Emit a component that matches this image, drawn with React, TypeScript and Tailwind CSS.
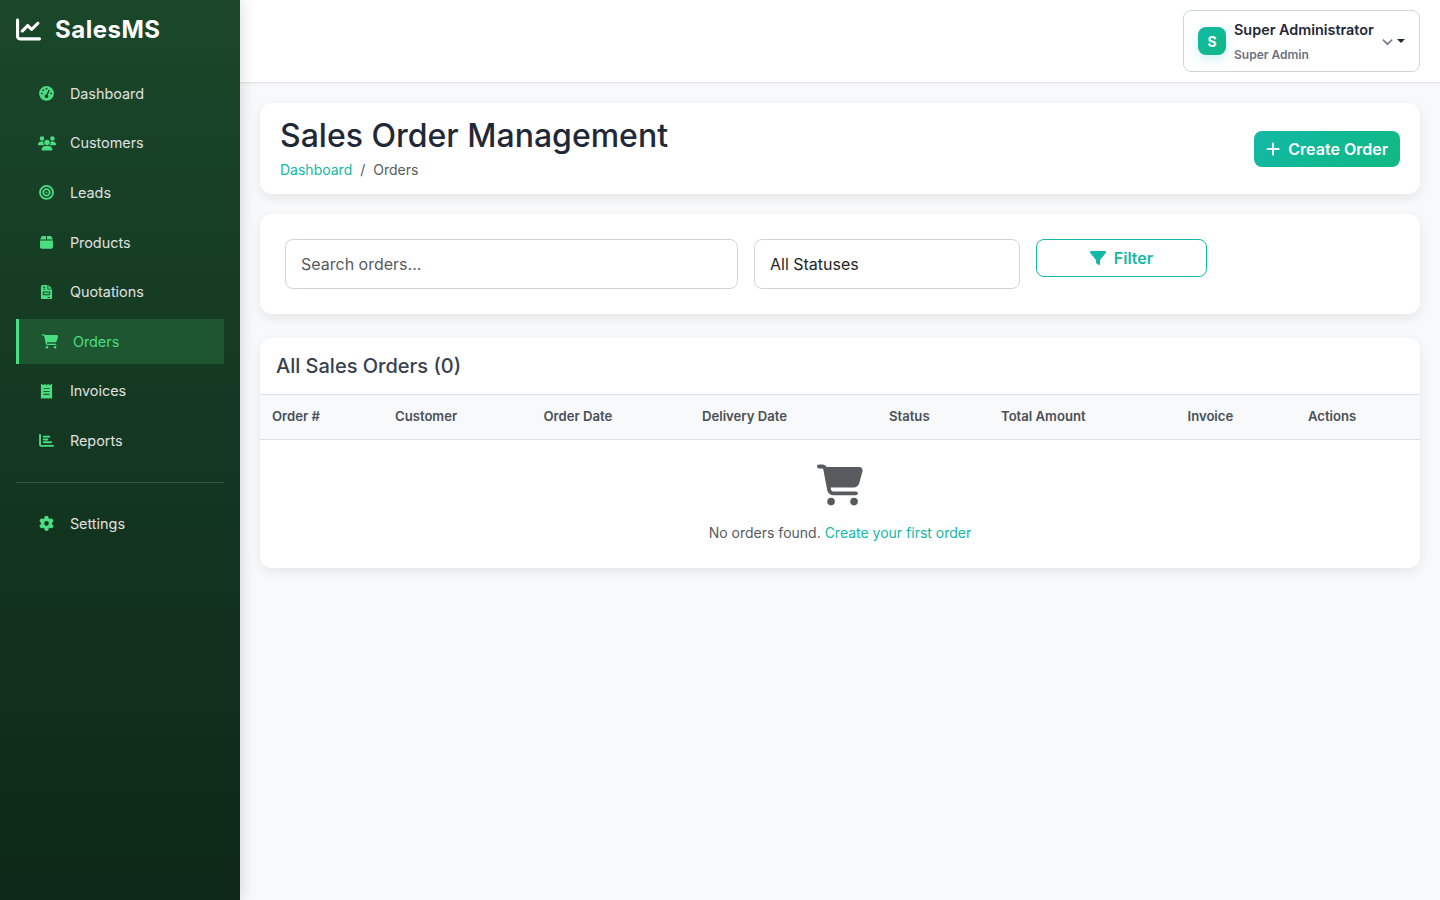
import React from "react";
import {
    FaBox,
    FaBullseye,
    FaCartShopping,
    FaChartBar,
    FaChartLine,
    FaChevronDown,
    FaFileInvoice,
    FaFilter,
    FaGaugeHigh,
    FaGear,
    FaPlus,
    FaReceipt,
    FaUsers,
} from "react-icons/fa6";
import { clsx } from "clsx";

const routes = [
    { label: "Dashboard", icon: FaGaugeHigh },
    { label: "Customers", icon: FaUsers, iconWidth: "w-[18px]" },
    { label: "Leads", icon: FaBullseye },
    { label: "Products", icon: FaBox },
    { label: "Quotations", icon: FaFileInvoice },
    { label: "Orders", icon: FaCartShopping, iconWidth: "w-[16.2px]", active: true },
    { label: "Invoices", icon: FaReceipt },
    { label: "Reports", icon: FaChartBar },
];

const columns = [
    { label: "Order #", width: "w-[123px]" },
    { label: "Customer", width: "w-[148.5px]" },
    { label: "Order Date", width: "w-[158.5px]" },
    { label: "Delivery Date", width: "w-[187px]" },
    { label: "Status", width: "w-[112px]" },
    { label: "Total Amount", width: "w-[186.5px]" },
    { label: "Invoice", width: "w-[120.5px]" },
    { label: "Actions", width: "w-[124px]" },
];

const cardClass = "bg-white rounded-xl shadow-[0_4px_12px_rgba(0,0,0,0.08)]";

type NavItemProps = {
    label: string;
    icon: React.ComponentType<{ className?: string }>;
    iconWidth?: string;
    active?: boolean;
};

const NavItem = ({ label, icon: Icon, iconWidth = "w-[15px]", active }: NavItemProps) => (
    <a
        href="#"
        className={clsx(
            "flex items-center h-[45.6px] mb-1 px-5 text-[14.4px]",
            active
                ? "border-l-3 border-[#4ade80] bg-[#1e5631] text-[#4ade80]"
                : "text-[#e0e0e0]"
        )}
    >
        <span className="flex w-[21.2px] mr-[12.7px] justify-center">
            <Icon className={clsx("h-[14.8px] shrink-0 text-[#4ade80]", iconWidth)} />
        </span>
        {label}
    </a>
);

const Sidebar = () => (
    <aside className="relative z-10 w-60 shrink-0 px-4 bg-linear-to-b from-[#1a472a] to-[#0d2818] shadow-[4px_0_12px_rgba(0,0,0,0.1)]">
        <a href="#" className="flex items-center h-[58px] text-2xl font-bold tracking-[0.5px] text-white">
            <FaChartLine className="size-[25px] mr-[14px]" />
            <span className="pt-[2px]">SalesMS</span>
        </a>
        <nav className="pt-[12.85px]">
            {routes.map((route) => (
                <NavItem key={route.label} {...route} />
            ))}
            <hr className="mt-[18.3px] mb-[18px] border-white/15" />
            <NavItem label="Settings" icon={FaGear} />
        </nav>
    </aside>
);

const Topbar = () => (
    <header className="flex items-center justify-end h-[83px] px-5 bg-white border-b border-[#e5e7eb] shadow-[0_1px_3px_rgba(0,0,0,0.05)]">
        <button className="flex items-center h-[62px] w-[237px] pl-[14px] border border-[#d1d5db] rounded-lg text-left">
            <span className="flex items-center justify-center size-7 mr-2 pt-px rounded-lg bg-linear-135 from-[#14b8a6] to-[#10b981] text-sm font-bold text-white shadow-[0_4px_12px_rgba(6,182,212,0.2)]">
                S
            </span>
            <span className="flex flex-col pt-[2px]">
                <span className="text-[14.4px] leading-[25px] font-semibold text-[#1f2937]">Super Administrator</span>
                <span className="text-xs leading-[25px] font-semibold text-[#6b7280]">Super Admin</span>
            </span>
            <FaChevronDown className="size-[11px] ml-2 stroke-[16px] text-[#6b7280]" />
            <span className="ml-1 border-x-4 border-t-4 border-x-transparent border-t-[#1f2937]" />
        </button>
    </header>
);

const App = () => {
    return (
        <div className="flex h-screen overflow-hidden bg-[#f8f9fb] font-['Inter',sans-serif] text-[#1f2937]">
            <Sidebar />
            <div className="flex-1">
                <Topbar />
                <main className="p-5">
                    <section className={clsx(cardClass, "flex items-center justify-between h-[91px] px-5")}>
                        <div>
                            <h1 className="text-[32px] leading-[38px] font-medium">Sales Order Management</h1>
                            <div className="flex gap-2 mt-1 text-sm leading-[22px] text-[#575b5e]">
                                <a href="#" className="text-[#14b8a6]">Dashboard</a>
                                <span>/</span>
                                <span>Orders</span>
                            </div>
                        </div>
                        <button className="flex items-center h-9 px-3 rounded-lg bg-linear-135 from-[#14b8a6] to-[#10b981] font-semibold text-white">
                            <FaPlus className="w-3.5 h-4 mr-2" />
                            Create Order
                        </button>
                    </section>

                    <section className={clsx(cardClass, "flex items-start gap-4 h-[100px] mt-5 p-[25px]")}>
                        <input
                            placeholder="Search orders..."
                            className="w-[453px] h-[50px] px-[15px] border border-[#d1d5db] rounded-lg placeholder:text-[#575b5e]"
                        />
                        <div className="flex items-center w-[266px] h-[50px] px-[15px] border border-[#d1d5db] rounded-lg text-[#212529]">
                            All Statuses
                        </div>
                        <button className="flex items-center justify-center w-[171px] h-[38px] border border-[#14b8a6] rounded-lg font-semibold text-[#14b8a6]">
                            <FaFilter className="size-4 mr-2" />
                            Filter
                        </button>
                    </section>

                    <section className={clsx(cardClass, "h-[230px] mt-6")}>
                        <h2 className="h-14 px-4 text-xl leading-[56px] font-medium text-[#374151]">All Sales Orders (0)</h2>
                        <table className="w-full table-fixed text-left">
                            <thead>
                                <tr className="h-[45px] bg-[#f8f9fb] border-y border-[#dee2e6]">
                                    {columns.map((col) => (
                                        <th key={col.label} className={clsx(col.width, "px-3 pb-px text-[13.12px] font-semibold text-[#495057]")}>
                                            {col.label}
                                        </th>
                                    ))}
                                </tr>
                            </thead>
                            <tbody>
                                <tr>
                                    <td colSpan={8} className="pt-6 text-center text-sm text-[#575b5e]">
                                        <FaCartShopping className="mx-auto mb-[17px] w-[46px] h-[42px]" />
                                        No orders found. <a href="#" className="text-[#14b8a6]">Create your first order</a>
                                    </td>
                                </tr>
                            </tbody>
                        </table>
                    </section>
                </main>
            </div>
        </div>
    );
};

export default App;
